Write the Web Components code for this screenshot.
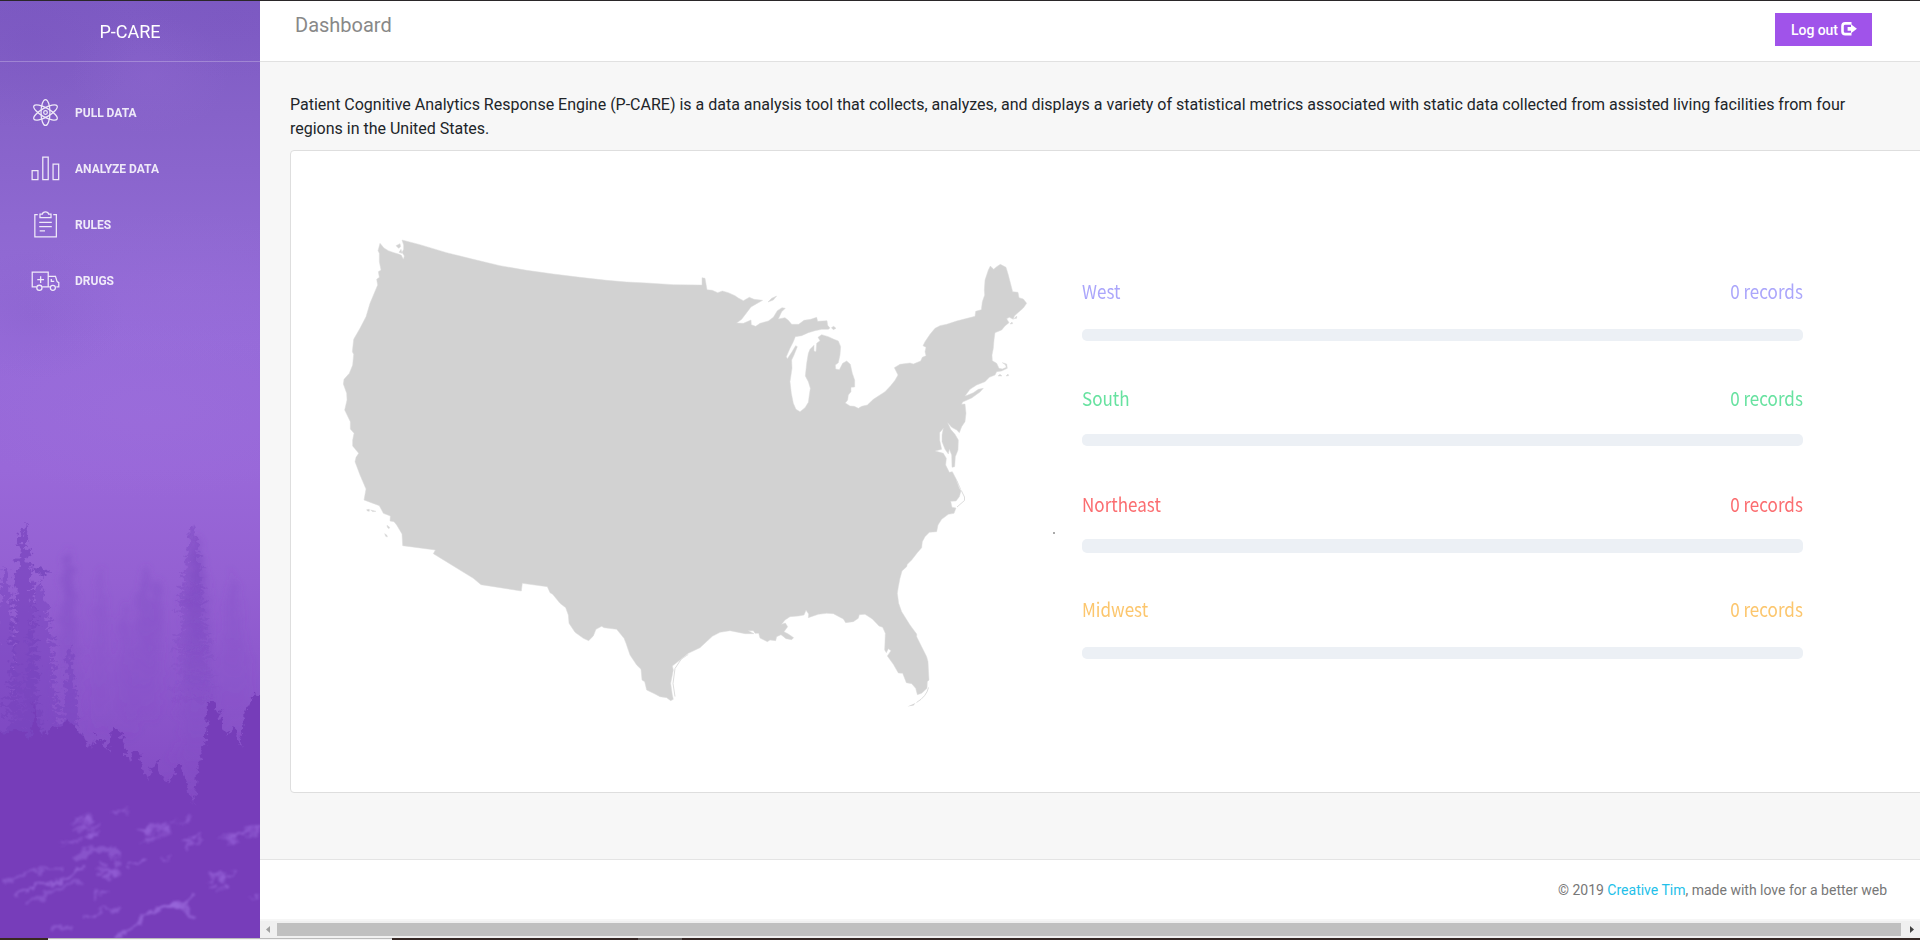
<!DOCTYPE html>
<html lang="en">
<head>
<meta charset="utf-8">
<title>P-CARE Dashboard</title>
<style>
html,body{margin:0;height:100%;overflow:hidden;font-family:Roboto,sans-serif;background:#f7f7f7}
</style>
</head>
<body>
<care-app></care-app>
<script>
const define = (name, html, setup) => customElements.define(name, class extends HTMLElement {
  constructor() {
    super();
    const t = document.createElement('template');
    t.innerHTML = html;
    this.attachShadow({mode: 'open'}).append(t.content.cloneNode(true));
  }
  connectedCallback() { if (setup) setup(this, this.shadowRoot); }
});

/* Forest backdrop: fog, conifers, undergrowth and lit rocks */
let seed = 7;
const rnd = () => (seed = (seed * 16807) % 2147483647) / 2147483647;
function conifer(cx, top, bottom, half) {
  const left = [], right = [], n = Math.round((bottom - top) / 4);
  for (let i = 0; i <= n; i++) {
    const y = top + (bottom - top) * i / n, w = half * Math.pow(i / n, .6);
    const k = i % 2 ? .45 : .8 + rnd() * .5;
    left.push(`${(cx - w * k).toFixed(1)},${(y + rnd() * 3).toFixed(1)}`);
    right.unshift(`${(cx + w * (i % 2 ? .45 : .8 + rnd() * .5)).toFixed(1)},${(y + rnd() * 3).toFixed(1)}`);
  }
  return `<polygon points="${left.concat(right).join(' ')}"/>`;
}
define('forest-backdrop', `<style>:host{display:block;width:100%;height:100%}svg{display:block}</style>
<svg width="260" height="937" viewBox="0 1 260 937">
<defs>
<linearGradient id="sky" x1="0" y1="0" x2="0" y2="1">
<stop offset="0" stop-color="#7d5ac3"/><stop offset=".12" stop-color="#8662c9"/><stop offset=".24" stop-color="#8e68d1"/><stop offset=".36" stop-color="#966bd9"/><stop offset=".5" stop-color="#9968d9"/><stop offset=".62" stop-color="#9460d2"/><stop offset=".76" stop-color="#8a54ca"/><stop offset="1" stop-color="#773cb9"/></linearGradient>
<radialGradient id="lite"><stop offset="0" stop-color="#a274df" stop-opacity=".55"/><stop offset="1" stop-color="#a274df" stop-opacity="0"/></radialGradient>
<radialGradient id="dim"><stop offset="0" stop-color="#7450ba" stop-opacity=".5"/><stop offset="1" stop-color="#7450ba" stop-opacity="0"/></radialGradient>
<linearGradient id="tree" x1="0" y1="0" x2="0" y2="1"><stop offset="0" stop-color="#7743bd" stop-opacity=".8"/><stop offset=".45" stop-color="#7743bd" stop-opacity=".6"/><stop offset="1" stop-color="#7743bd" stop-opacity=".05"/></linearGradient>
<linearGradient id="haze" x1="0" y1="0" x2="0" y2="1"><stop offset="0" stop-color="#7e4bc3"/><stop offset="1" stop-color="#7e4bc3" stop-opacity=".1"/></linearGradient>
<filter id="rough" x="-30%" y="-10%" width="160%" height="120%"><feTurbulence type="fractalNoise" baseFrequency=".14" numOctaves="3" seed="4"/><feDisplacementMap in="SourceGraphic" scale="13" xChannelSelector="R" yChannelSelector="G"/><feGaussianBlur stdDeviation=".6"/></filter>
<filter id="fog" x="-30%" y="-10%" width="160%" height="120%"><feTurbulence type="fractalNoise" baseFrequency=".12" numOctaves="2" seed="9"/><feDisplacementMap in="SourceGraphic" scale="14" xChannelSelector="R" yChannelSelector="G"/><feGaussianBlur stdDeviation="3"/></filter>
<filter id="rock" x="-10%" y="-20%" width="120%" height="140%"><feTurbulence type="fractalNoise" baseFrequency=".1" numOctaves="3" seed="3"/><feDisplacementMap in="SourceGraphic" scale="14" xChannelSelector="R" yChannelSelector="G"/><feGaussianBlur stdDeviation=".9"/></filter>
</defs>
<rect y="1" width="260" height="937" fill="url(#sky)"/>
<ellipse cx="30" cy="40" rx="110" ry="90" fill="url(#dim)" opacity=".5"/><ellipse cx="230" cy="20" rx="110" ry="60" fill="url(#dim)" opacity=".3"/>
<ellipse cx="35" cy="315" rx="90" ry="65" fill="url(#dim)" opacity=".3"/>
<ellipse cx="150" cy="75" rx="80" ry="60" fill="url(#lite)" opacity=".25"/><ellipse cx="180" cy="290" rx="170" ry="80" fill="url(#lite)" opacity=".3"/>
<ellipse cx="150" cy="410" rx="190" ry="90" fill="url(#lite)" opacity=".4"/>
<g id="far" filter="url(#fog)" fill="url(#haze)"></g>
<g id="near" filter="url(#rough)"></g>
<g filter="url(#rough)" fill="#763eb9">
<path d="M-10 735L15 730 30 738 34 700 40 735 55 728 68 722 82 735 90 748 96 735 103 742 108 752 113 727 118 728 124 742 128 762 133 752 139 752 142 765 146 782 154 762 159 764 165 782 172 778 177 762 182 765 188 790 194 805 198 765 206 740 207 700 213 700 220 712 226 735 234 726 240 745 246 712 252 695 275 690 275 950-10 950z"/>
</g>
<rect y="800" width="260" height="138" fill="#783dba" opacity=".6"/>
<g id="rocks" filter="url(#rock)" fill="#9460d6"></g>
<g filter="url(#rock)" fill="none" stroke="#9a68dc" stroke-linecap="round">
<path d="M3 883C25 870 45 868 62 868" stroke-width="3" opacity=".5"/><path d="M15 895C40 878 55 892 82 867" stroke-width="3" opacity=".7"/>
<path d="M30 902C48 895 58 888 78 882" stroke-width="4" opacity=".45"/><path d="M78 858C92 848 110 846 120 856" stroke-width="7" opacity=".5"/>
<path d="M84 920C98 905 112 912 120 908" stroke-width="2" opacity=".6"/><path d="M118 936C145 925 140 912 162 908S185 903 194 896" stroke-width="4" opacity=".7"/><path d="M160 908C175 903 185 905 194 916" stroke-width="4" opacity=".65"/>
<path d="M55 928Q65 922 72 928" stroke-width="5" opacity=".5"/><path d="M130 866Q140 860 146 861" stroke-width="2" opacity=".8"/>
</g></svg>`, (h, r) => {
  r.getElementById('far').innerHTML =
    `<g opacity=".6">${conifer(68, 545, 720, 18)}</g><g opacity=".25">${conifer(101, 565, 730, 16)}</g><g opacity=".45">${conifer(145, 565, 720, 20)}${conifer(157, 575, 680, 10)}</g><g opacity=".25">${conifer(233, 570, 740, 26)}${conifer(125, 600, 740, 18)}</g><g opacity=".6">${conifer(198, 535, 800, 30)}</g>`;
  r.getElementById('near').innerHTML =
    `<g fill="url(#tree)" opacity=".5">${conifer(193, 522, 700, 24)}</g><g fill="#7743bd" opacity=".7">${conifer(24, 520, 740, 22)}</g><g fill="#7743bd" opacity=".5">${conifer(5, 560, 760, 22)}${conifer(40, 580, 770, 30)}${conifer(70, 645, 760, 12)}</g><path d="M28 565l22 5-8 8z" fill="#7743bd" opacity=".8"/>`;
  const patches = [[83,820,12,5],[88,832,11,9],[120,810,8,3],[147,835,20,9],[160,828,8,6],[195,840,13,6],[182,821,10,3],[238,835,18,7],[250,829,9,5],[110,867,11,13],[220,885,8,9],[222,875,13,4],[100,893,8,4],[167,858,5,3],[256,898,4,2],[70,842,9,4]];
  r.getElementById('rocks').innerHTML = patches.map(([x, y, a, b]) => {
    let s = '';
    for (let i = 0; i < 9; i++) s += `<ellipse cx="${x + (rnd() - .5) * a * 1.8}" cy="${y + (rnd() - .5) * b * 1.6}" rx="${a * .38}" ry="${b * .22}" opacity="${.3 + rnd() * .45}" transform="rotate(-12 ${x} ${y})"/>`;
    return s;
  }).join('');
});

/* Thin line icons of the navigation, 32x32 */
const ICONS = {
  atom: '<ellipse cx="16" cy="16" rx="4.600" ry="13.400"/><ellipse cx="16" cy="16" rx="4.600" ry="13.800" transform="rotate(60 16 16)"/><ellipse cx="16" cy="16" rx="4.600" ry="13.800" transform="rotate(-60 16 16)"/><circle cx="16" cy="16" r="1.900"/>',
  bars: '<path d="M2.200 18.200h6v9.400h-6zM13.200 4.200h5.600v23.400h-5.600zM23.800 11.400h5.800v16.200h-5.800z"/>',
  board: '<path d="M8 5.700H5v23.100h22.200V5.700H24M10.300 8.800V5.200h2.500c.5-3 5.900-3 6.400 0h2.500v3.600zM9.500 13.700h13M9.500 18.100h13M10 22.600h5.500"/>',
  truck: '<path d="M6.800 22.500H2.300V7.300h16.500v15.200H12.600M18.800 11.700h7.500l1.700 5.500 1.700 1v4.300h-2.500M18.800 22.500h1.700M11 11.500v7M7.500 15h7M22 14.500v2.500h3"/><circle cx="9.700" cy="23.600" r="2.700"/><circle cx="23.600" cy="23.600" r="2.600"/>'
};
define('nav-item', `<style>
:host{display:flex;align-items:center;height:56px;padding-left:30px;gap:14px;color:#fff;font:700 12px/30px Roboto,sans-serif;opacity:.86}
svg{width:31px;height:31px;fill:none;stroke:#fff;stroke-width:1.3}
span{padding-top:2px}
</style><svg viewBox="0 0 32 32"></svg><span><slot></slot></span>`,
(h, r) => r.querySelector('svg').innerHTML = ICONS[h.getAttribute('icon')]);

define('side-bar', `<style>
:host{display:grid;width:260px;flex:none;overflow:hidden}
forest-backdrop,.front{grid-area:1/1}
.front{z-index:1}
header{box-sizing:border-box;height:61px;border-bottom:1px solid rgba(255,255,255,.25);color:#fff;font-size:18px;line-height:61px;text-align:center}
nav{padding-top:22px}
</style><forest-backdrop></forest-backdrop><div class="front"><header>P-CARE</header><nav>
<nav-item icon="atom">PULL DATA</nav-item><nav-item icon="bars">ANALYZE DATA</nav-item><nav-item icon="board">RULES</nav-item><nav-item icon="truck">DRUGS</nav-item></nav></div>`);

define('log-out', `<style>
:host{display:flex;box-sizing:border-box;align-items:center;padding-left:16px;gap:3px;width:97px;height:33px;background:#a053ea;color:#fff;font:500 14px/33px Roboto,sans-serif}
span{padding-top:2px;letter-spacing:-.05px}
svg{margin-top:-1px}
</style><span><slot></slot></span><svg width="16" height="14" viewBox="0 0 16 14"><path d="M10.500 1.400H4.200Q1.500 1.400 1.500 4v5.500q0 2.600 2.700 2.600h6.300" fill="none" stroke="#fff" stroke-width="2.600"/><path d="M6.600 5H10V2.300l5.900 4.500-5.900 4.500V8.700H6.600z" fill="#fff"/></svg>`);

define('top-bar', `<style>
:host{display:flex;justify-content:space-between;box-sizing:border-box;height:61px;flex:none;background:#fff;border-bottom:1px solid #e1e1e1;padding:12px 48px 0 35px}
h1{margin:0;font-size:20px;font-weight:400;line-height:25px;color:#888}
</style><h1><slot></slot></h1><log-out>Log out</log-out>`);

/* Outline of the contiguous states. Each run of the coast has its own origin
   and is written on a grid three times finer than the drawing. */
const COAST = [
 [320,220,'180,70 192,84 205,92 222,98 238,103 244,106 250,118 253,108 246,97 251,88 251,75 246,60 300,74 380,98 460,118 540,137 620,151 700,162 780,172 860,181 920,186 980,189 1060,194 1140,195'],
 [680,240,'66,135 66,113 75,115 81,149 97,151 113,158 127,153 145,158 165,167 175,174 190,182 208,172 222,178 248,181 230,191 213,201 200,218 185,238 170,249 190,250 213,240 214,254 227,259 240,250 265,243 280,232 292,212 306,203 316,205 305,215 295,237 315,233 325,241 335,253 356,253 372,241 392,238 410,232 413,244 441,242 443,256 450,264 445,268 425,268 405,272 385,278 365,287 346,290 340,305 330,325 319,350 322,356 335,337 347,317 352,320 342,345 335,360 336,385 330,425 334,460 340,490 348,508 360,515 375,503 385,487 388,465 391,445 385,425 376,408 380,370 385,340 390,328 402,316 402,333 408,335 410,310 420,302 414,292 425,284 445,290 460,297 475,303 482,320 480,345 475,368 466,375 467,387 478,389 488,370 500,363 511,373 517,400 524,420 524,441 513,442 513,455 505,465 503,480 496,489 510,498 523,499 535,505 545,499 562,495 580,478 615,455 632,437 645,421 654,405 643,383 660,373 690,369 700,372 722,363 727,352 738,347 735,335 738,322 729,317 735,305 750,283 765,265 780,257 800,253 830,243 885,229 887,214 904,209 907,185 914,165 913,150 915,120 925,90 931,78 941,88 950,80 961,73 978,82 985,105 998,155 1014,157 1017,173 1030,177 1040,190 1030,204 1012,220 1003,228 1000,238 988,232 980,236 987,248 975,258 965,270 945,278 942,300 940,325 936,345 937,362 950,370 957,385 967,387 979,382 976,374 967,368 980,372 982,385 965,393 950,395 945,405 928,412 915,425 890,435 870,448 855,468 862,466 880,458 895,448 910,445 900,456 875,474 848,486 845,493 855,492 858,520 855,545 845,560 838,578 830,570 815,562 803,548 812,568 825,583 835,600 834,630 826,650 824,680 816,682 815,645 808,628 805,642 795,628 786,605 786,585 790,565 779,578 779,600 785,628 766,633 790,640 799,655 797,675 808,697 817,695 830,720 842,748'],
 [680,470,'829,30 838,55 843,62 838,80 828,93 812,94 816,112 828,114 822,130 805,133 785,148 774,165 770,185 748,187 735,200 727,215 725,233 712,248 695,270 682,283 680,290 666,303 660,325 655,350 652,370 656,400 665,425 690,465 710,492 710,500 725,530 740,560 744,575 747,630 742,635 741,655 725,670 712,674 707,655 695,641 679,638 668,610 655,609 640,583 622,558 633,542 625,536 619,548 614,540 616,490 608,472 597,468 577,447 555,433 538,434 535,445 520,455 497,458 490,447 460,431 440,430 415,433 385,443 386,432 378,421 372,435 355,438 330,440 315,450 305,463 316,459 323,470 312,485 325,492 341,503 335,509 318,506 303,494 290,500 287,512 270,510 262,515 240,504 236,490 225,490 220,482 205,482 222,491 195,491 150,482 120,487 97,499 60,533 25,550 0,570'],
 [320,440,'1105,643 1080,660 1057,678 1060,690 1052,730 1057,765 1060,778 1052,782 1040,773 1020,770 1005,762 980,750 974,725 966,720 963,688 950,675 930,645 918,610 912,595 890,568 852,563 845,559 828,568 820,588 806,602 790,595 765,577 747,550 745,525 737,503 720,490 698,463 690,458 682,440 607,430 604,453 483,434 460,415 340,341 346,330 248,317 246,282 230,255 222,245 210,243 211,228 190,220 178,197 132,180 138,147 120,105 105,65 108,52 116,40 98,18 98,0'],
 [320,220,'102,640 91,627 91,605 74,570 81,540 80,520 70,492 72,478 88,460 98,435 101,403 97,395 101,358 120,325 138,290 150,250 173,195 170,178 178,172 175,155 183,150 178,125 178,100 174,92']
];
const ISLANDS = [
 [680,240,'264,186 275,175 290,168 280,180'],[680,240,'454,263 461,259 468,265 460,269'],
 [680,240,'954,408 960,403 966,408'],[680,240,'978,408 984,402 986,407'],
 [680,240,'990,252 996,246 998,251'],[680,240,'1002,236 1010,228 1010,235'],
 [320,220,'228,77 240,71 242,80 236,85'],[320,220,'237,97 243,88 246,100'],
 [320,440,'140,209 148,208 148,214 142,213'],[320,440,'152,210 168,214 158,215'],[320,440,'201,256 209,262 207,266 202,262'],[320,440,'194,281 201,286 202,291 197,289']
];
const pts = ([ox, oy, s]) => s.split(' ').map(p => { const [x, y] = p.split(',').map(Number); return `${(ox + x / 3).toFixed(2)} ${(oy + y / 3).toFixed(2)}`; }).join('L');
define('us-map', `<style>:host{display:block;width:700px;height:480px}svg{display:block}</style>
<svg width="700" height="480" viewBox="340 235 700 480"><path id="land" fill="#d2d2d2" stroke="#dcdcdc" stroke-width=".5" stroke-linejoin="round"/>
<g fill="none" stroke="#d8d8d8" stroke-width=".9"><path d="M961.300 490.500l3.200 6.500v3.500l-7.500 6.500M681 659.500l-6 9-2 15 2 13M928.500 687.500q-2 9-12 15"/></g><path d="M907.500 706.500l8-3.500-2 2.500z" fill="#d4d4d4"/></svg>`,
(h, r) => r.getElementById('land').setAttribute('d', 'M' + COAST.map(pts).join('L') + 'Z' + ISLANDS.map(i => 'M' + pts(i) + 'Z').join('')));

define('region-row', `<style>
:host{display:block;height:var(--h)}
.label{display:flex;justify-content:space-between;height:26px;color:var(--c);font:400 19.200px/26px "Noto Sans CJK SC","Noto Sans",sans-serif}
.bar{height:var(--bar,12px);margin-top:var(--gap);border-radius:5px;background:#ecf0f5}
.label span{transform:scaleX(.888);transform-origin:left}
.label span:last-child{transform-origin:right}
</style><div class="label"><span><slot></slot></span><span>0 records</span></div><div class="bar"></div>`);

define('region-card', `<style>
:host{display:flex;box-sizing:border-box;width:1700px;height:643px;background:#fff;border:1px solid #dedede;border-radius:4px}
us-map{margin:84px 0 0 49px;flex:none}
.dot{width:2px;height:2px;background:#aaa;margin:381px 0 0 13px;flex:none}
.rows{margin:127px 0 0 27px;width:721px;flex:none}
</style><us-map></us-map><i class="dot"></i><div class="rows">
<region-row style="--c:#aba6fb;--h:107px;--gap:25px">West</region-row>
<region-row style="--c:#67e2a0;--h:106px;--gap:23px">South</region-row>
<region-row style="--c:#fb6d70;--h:105px;--gap:22px;--bar:14px">Northeast</region-row>
<region-row style="--c:#fcc66d;--h:70px;--gap:25px">Midwest</region-row></div>`);

define('page-footer', `<style>
:host{display:block;box-sizing:border-box;height:60px;flex:none;background:#fff;border-top:1px solid #e4e4e4;padding-right:33px;text-align:right;font-size:14px;line-height:61px;color:#777}
a{color:#23bfe9}
</style>© 2019 <a>Creative Tim</a>, made with love for a better web`);

define('scroll-strip', `<style>
:host{display:flex;align-items:center;box-sizing:border-box;height:19px;flex:none;background:#f0f0f0;border-top:2px solid #f6f6f6}
.thumb{flex:1;height:13px;background:#c0c0c0}
svg{width:17px;height:17px;flex:none}svg:last-child{width:19px}
</style><svg viewBox="0 0 17 17"><path d="M10 5v7L6 8.500z" fill="#a0a0a0"/></svg><div class="thumb"></div><svg viewBox="0 0 19 17"><path d="M9 5v7l4-3.500z" fill="#404040"/></svg>`);

define('care-app', `<style>
:host{display:flex;flex-direction:column;height:940px;width:1920px;overflow:hidden}
.edge{height:1px;background:#2a2729;flex:none}
.body{display:flex;height:937px;flex:none}
main{display:flex;flex-direction:column;width:1660px;overflow:hidden;background:#f7f7f7}
.content{flex:1;min-height:0;padding:31px 0 0 30px}
p{margin:0;width:1600px;font-size:16px;line-height:24px;color:#212529;padding-bottom:9px;letter-spacing:-.005px}
.desk{display:flex;height:2px;flex:none;background:#352825}
.desk i{width:48px;background:#38291f}.desk b{box-sizing:border-box;width:344px;background:#f4f4f4;border-top:1px solid #bbb}
.desk u{width:44px;margin-left:246px;background:#625d5b}
</style><div class="edge"></div><div class="body"><side-bar></side-bar><main><top-bar>Dashboard</top-bar>
<div class="content"><p>Patient Cognitive Analytics Response Engine (P-CARE) is a data analysis tool that collects, analyzes, and displays a variety of statistical metrics associated with static data collected from assisted living facilities from four regions in the United States.</p><region-card></region-card></div>
<page-footer></page-footer><scroll-strip></scroll-strip></main></div><div class="desk"><i></i><b></b><u></u></div>`);
</script>
</body>
</html>
